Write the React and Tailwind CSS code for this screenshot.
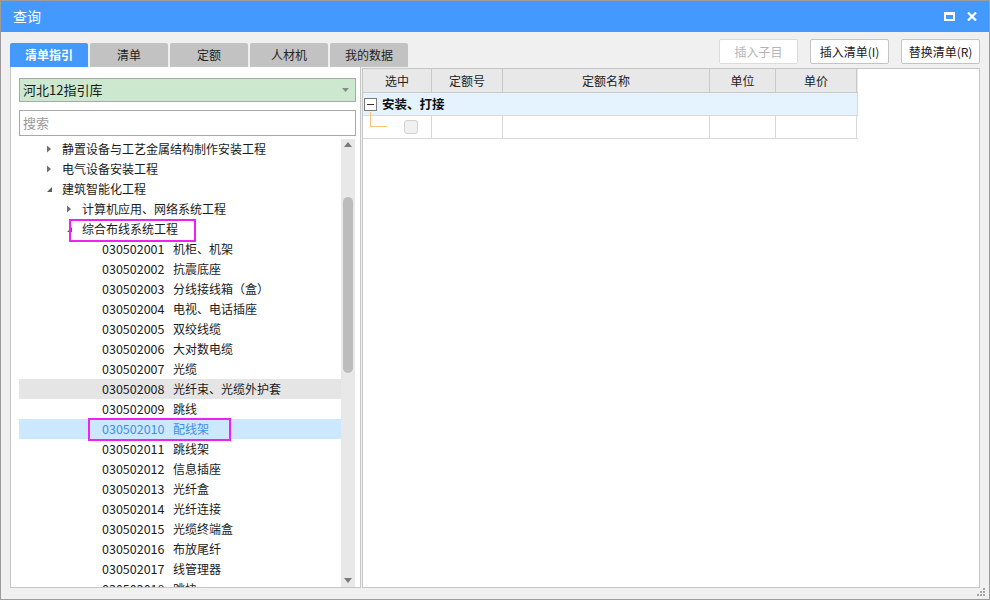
import React from "react";

const tree = [
  { lv: 1, t: "静置设备与工艺金属结构制作安装工程", s: "c" },
  { lv: 1, t: "电气设备安装工程", s: "c" },
  { lv: 1, t: "建筑智能化工程", s: "e" },
  { lv: 2, t: "计算机应用、网络系统工程", s: "c" },
  { lv: 2, t: "综合布线系统工程", s: "e" },
  { lv: 3, c: "030502001", t: "机柜、机架" },
  { lv: 3, c: "030502002", t: "抗震底座" },
  { lv: 3, c: "030502003", t: "分线接线箱（盒）" },
  { lv: 3, c: "030502004", t: "电视、电话插座" },
  { lv: 3, c: "030502005", t: "双绞线缆" },
  { lv: 3, c: "030502006", t: "大对数电缆" },
  { lv: 3, c: "030502007", t: "光缆" },
  { lv: 3, c: "030502008", t: "光纤束、光缆外护套", hover: true },
  { lv: 3, c: "030502009", t: "跳线" },
  { lv: 3, c: "030502010", t: "配线架", sel: true },
  { lv: 3, c: "030502011", t: "跳线架" },
  { lv: 3, c: "030502012", t: "信息插座" },
  { lv: 3, c: "030502013", t: "光纤盒" },
  { lv: 3, c: "030502014", t: "光纤连接" },
  { lv: 3, c: "030502015", t: "光缆终端盒" },
  { lv: 3, c: "030502016", t: "布放尾纤" },
  { lv: 3, c: "030502017", t: "线管理器" },
  { lv: 3, c: "030502018", t: "跳块" },
];

function Tri({ s }) {
  if (s === "c")
    return (
      <svg width="6" height="8" viewBox="0 0 6 8" className="block">
        <path d="M1 0.5 L5 4 L1 7.5 Z" fill="#6f6f6f" />
      </svg>
    );
  return (
    <svg width="7" height="7" viewBox="0 0 7 7" className="block">
      <path d="M6 1 L6 6 L1 6 Z" fill="#5c5c5c" />
    </svg>
  );
}

function Row({ r }) {
  const bg = r.sel ? "bg-[#cce8ff]" : r.hover ? "bg-[#e5e5e5]" : "";
  const color = r.sel ? "text-[#3f8fe6]" : "text-[#1a1a1a]";
  const pl = r.lv === 1 ? "pl-[27px]" : r.lv === 2 ? "pl-[47px]" : "pl-[83px]";
  return (
    <div className={`h-[20px] flex items-center ${bg} ${color} ${pl} whitespace-nowrap text-[12px] leading-[20px]`}>
      {r.lv < 3 ? (
        <>
          <span className="w-[16px] flex items-center">
            <Tri s={r.s} />
          </span>
          <span>{r.t}</span>
        </>
      ) : (
        <>
          <span className="inline-block w-[71px] text-[12.5px]">{r.c}</span>
          <span>{r.t}</span>
        </>
      )}
    </div>
  );
}

export default function App() {
  const font = "font-['Microsoft_YaHei','Noto_Sans_CJK_SC','Noto_Sans',sans-serif]";
  return (
    <div className={`w-[990px] h-[600px] flex flex-col bg-[#f0f0f0] border border-[#9c9c9c] ${font} overflow-hidden`}>
      {/* title bar */}
      <div className="h-[31px] shrink-0 bg-[#4499ff] flex items-center pl-[12px] pr-[10px] text-white text-[14px]">
        <span>查询</span>
        <div className="ml-auto flex items-center gap-[12px]">
          <div className="w-[11px] h-[9px] border-2 border-t-[3px] border-white" />
          <svg width="10" height="9" viewBox="0 0 10 9" className="block mr-[2px]">
            <path d="M1 0.5 L9 8.5 M9 0.5 L1 8.5" stroke="#fff" strokeWidth="2.2" />
          </svg>
        </div>
      </div>

      {/* toolbar */}
      <div className="h-[35px] shrink-0 flex pl-[9px] pr-[9px]">
        <div className="flex items-end gap-[2px]">
          <div className="w-[78px] h-[24px] rounded-t-[2px] bg-[#4499ff] text-white font-bold text-[12px] flex items-center justify-center">清单指引</div>
          <div className="w-[78px] h-[24px] rounded-t-[2px] bg-[#c2c2c2] text-[#222] text-[12px] flex items-center justify-center">清单</div>
          <div className="w-[78px] h-[24px] rounded-t-[2px] bg-[#c2c2c2] text-[#222] text-[12px] flex items-center justify-center">定额</div>
          <div className="w-[78px] h-[24px] rounded-t-[2px] bg-[#c2c2c2] text-[#222] text-[12px] flex items-center justify-center">人材机</div>
          <div className="w-[78px] h-[24px] rounded-t-[2px] bg-[#c2c2c2] text-[#222] text-[12px] flex items-center justify-center">我的数据</div>
        </div>
        <div className="ml-auto flex items-start gap-[12px] pt-[7px]">
          <div className="w-[79px] h-[25px] rounded-[2px] border border-[#dcdcdc] bg-white text-[#b4b4b4] text-[12px] flex items-center justify-center">插入子目</div>
          <div className="w-[79px] h-[25px] rounded-[2px] border border-[#c4c4c4] bg-white text-[#1a1a1a] text-[12px] flex items-center justify-center">插入清单(I)</div>
          <div className="w-[79px] h-[25px] rounded-[2px] border border-[#c4c4c4] bg-white text-[#1a1a1a] text-[12px] flex items-center justify-center">替换清单(R)</div>
        </div>
      </div>

      {/* main */}
      <div className="h-[521px] shrink-0 flex pl-[9px] pr-[9px]">
        {/* left panel */}
        <div className="w-[351px] h-[521px] bg-white border-l border-r border-b border-[#c6c6c6] flex flex-col pl-[8px] pt-[11px]">
          <div className="w-[337px] h-[24px] bg-[#cce8cf] border border-[#a8a8a8] flex items-center pl-[3px] pr-[6px] text-[13px] text-[#1a1a1a]">
            <span>河北12指引库</span>
            <svg width="7" height="4" viewBox="0 0 7 4" className="ml-auto block">
              <path d="M0 0 L7 0 L3.5 4 Z" fill="#8a8a8a" />
            </svg>
          </div>
          <div className="w-[337px] h-[26px] mt-[8px] bg-white border border-[#a8a8a8] flex items-center pl-[3px] text-[13px] text-[#9a9a9a]">搜索</div>
          <div className="relative w-[336px] h-[448px] mt-[3px] flex overflow-hidden">
            <div className="w-[322px] h-[448px] overflow-hidden">
              {tree.map((r, i) => (
                <Row key={i} r={r} />
              ))}
            </div>
            <div className="w-[14px] h-[448px] bg-[#e8e8e8] relative">
              <svg width="8" height="5" viewBox="0 0 8 5" className="absolute left-[3px] top-[3px]">
                <path d="M0 5 L8 5 L4 0 Z" fill="#7a7a7a" />
              </svg>
              <div className="absolute left-[2px] top-[58px] w-[10px] h-[176px] rounded-[5px] bg-[#bcbcbc]" />
              <svg width="8" height="5" viewBox="0 0 8 5" className="absolute left-[3px] bottom-[4px]">
                <path d="M0 0 L8 0 L4 5 Z" fill="#7a7a7a" />
              </svg>
            </div>
            <div className="absolute left-[50px] top-[80px] w-[127px] h-[23px] border-2 border-[#ee22ee]" />
            <div className="absolute left-[69px] top-[279px] w-[143px] h-[23px] border-2 border-[#ee22ee]" />
          </div>
        </div>

        {/* right panel */}
        <div className="ml-[1px] mt-[1px] w-[618px] h-[520px] bg-white border border-[#c6c6c6]">
          <div className="w-[495px] text-[12px] text-[#222]">
            <div className="h-[24px] flex bg-[#e8e8e8] border-b border-[#c8c8c8]">
              <div className="w-[69px] border-r border-[#c8c8c8] flex items-center justify-center">选中</div>
              <div className="w-[71px] border-r border-[#c8c8c8] flex items-center justify-center">定额号</div>
              <div className="w-[207px] border-r border-[#c8c8c8] flex items-center justify-center">定额名称</div>
              <div className="w-[66px] border-r border-[#c8c8c8] flex items-center justify-center">单位</div>
              <div className="w-[81px] border-r border-[#c8c8c8] flex items-center justify-center">单价</div>
            </div>
            <div className="h-[23px] flex items-center bg-[#e5f3ff] border-b border-r border-[#d8d8d8]">
              <div className="ml-[1px] w-[13px] h-[13px] border border-[#7a7a7a] bg-white flex items-center justify-center">
                <div className="w-[7px] h-[1px] bg-[#333]" />
              </div>
              <span className="ml-[5px] font-bold text-[12.5px] text-[#111]">安装、打接</span>
            </div>
            <div className="h-[23px] flex border-b border-[#d8d8d8] relative">
              <div className="absolute left-[7px] top-[-4px] w-[17px] h-[15px] border-l border-b border-[#ffc27a]" />
              <div className="w-[69px] border-r border-[#d8d8d8] flex items-center pl-[41px]">
                <div className="w-[14px] h-[14px] rounded-[3px] border border-[#d2d2d2] bg-[#f0f0f0]" />
              </div>
              <div className="w-[71px] border-r border-[#d8d8d8]" />
              <div className="w-[207px] border-r border-[#d8d8d8]" />
              <div className="w-[66px] border-r border-[#d8d8d8]" />
              <div className="w-[81px] border-r border-[#d8d8d8]" />
            </div>
          </div>
        </div>
      </div>

      {/* bottom strip with grip */}
      <div className="flex-1 relative">
        <svg width="9" height="9" viewBox="0 0 9 9" className="absolute right-[3px] bottom-[2px]">
          <rect x="6" y="0" width="2" height="2" fill="#a4a4a4" />
          <rect x="3" y="3" width="2" height="2" fill="#a4a4a4" />
          <rect x="6" y="3" width="2" height="2" fill="#a4a4a4" />
          <rect x="0" y="6" width="2" height="2" fill="#a4a4a4" />
          <rect x="3" y="6" width="2" height="2" fill="#a4a4a4" />
          <rect x="6" y="6" width="2" height="2" fill="#a4a4a4" />
        </svg>
      </div>
    </div>
  );
}
